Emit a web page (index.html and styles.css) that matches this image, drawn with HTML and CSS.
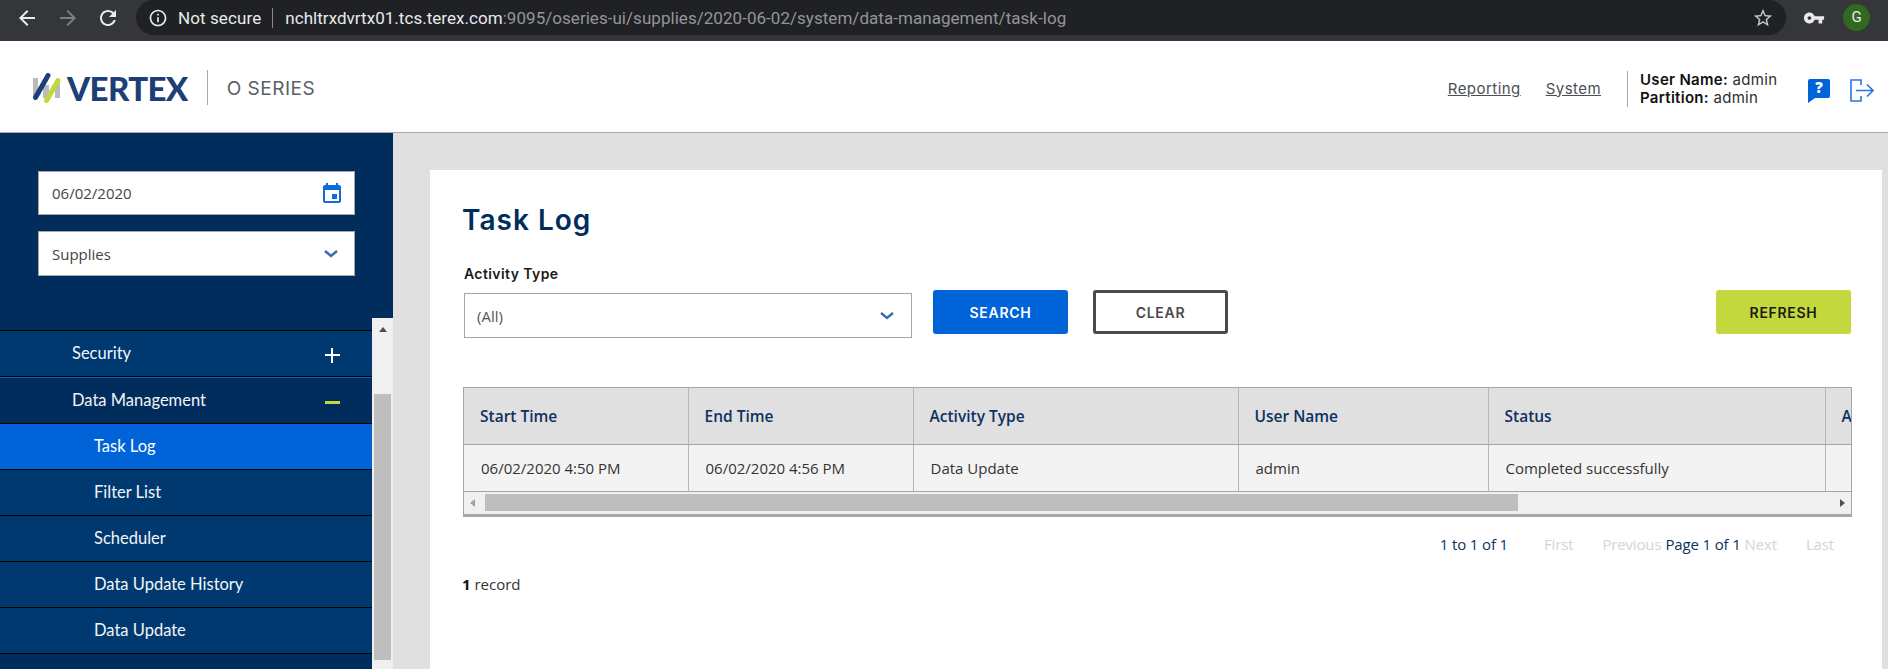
FILE: index.html
```html
<!DOCTYPE html>
<html lang="en">
<head>
    <meta charset="UTF-8">
    <meta name="viewport" content="width=device-width, initial-scale=1.0">
    <title>Task Log</title>
    <link rel="stylesheet" href="styles.css">
</head>
<body>
    <div class="browser-bar">
        <svg class="browser-btn back" viewBox="0 0 24 24"><path d="M20 11H7.83l5.59-5.59L12 4l-8 8 8 8 1.41-1.41L7.83 13H20v-2z"/></svg>
        <svg class="browser-btn forward" viewBox="0 0 24 24"><path d="M4 11h12.17l-5.59-5.59L12 4l8 8-8 8-1.41-1.41L16.17 13H4v-2z"/></svg>
        <svg class="browser-btn reload" viewBox="0 0 24 24"><path d="M17.65 6.35C16.2 4.9 14.21 4 12 4c-4.42 0-7.99 3.58-7.99 8s3.57 8 7.99 8c3.73 0 6.84-2.55 7.73-6h-2.08c-.82 2.33-3.04 4-5.65 4-3.31 0-6-2.69-6-6s2.69-6 6-6c1.66 0 3.14.69 4.22 1.78L13 11h7V4l-2.35 2.35z"/></svg>
        <div class="address-pill">
            <svg class="info-icon" viewBox="0 0 24 24"><path d="M11 7h2v2h-2zm0 4h2v6h-2zm1-9C6.48 2 2 6.48 2 12s4.48 10 10 10 10-4.48 10-10S17.52 2 12 2zm0 18c-4.41 0-8-3.59-8-8s3.59-8 8-8 8 3.59 8 8-3.59 8-8 8z"/></svg>
            <span class="not-secure">Not secure</span>
            <span class="address-sep"></span>
            <span class="url"><span class="url-host">nchltrxdvrtx01.tcs.terex.com</span>:9095/oseries-ui/supplies/2020-06-02/system/data-management/task-log</span>
            <svg class="star-icon" viewBox="0 0 24 24"><path d="M22 9.24l-7.19-.62L12 2 9.19 8.63 2 9.24l5.46 4.73L5.82 21 12 17.27 18.18 21l-1.63-7.03L22 9.24zM12 15.4l-3.76 2.27 1-4.28-3.32-2.88 4.38-.38L12 6.1l1.71 4.04 4.38.38-3.32 2.88 1 4.28L12 15.4z"/></svg>
        </div>
        <svg class="key-icon" viewBox="0 0 24 24"><path d="M12.65 10C11.83 7.67 9.61 6 7 6c-3.31 0-6 2.69-6 6s2.69 6 6 6c2.61 0 4.83-1.67 5.65-4H17v4h4v-4h2v-4H12.65zM7 14c-1.1 0-2-.9-2-2s.9-2 2-2 2 .9 2 2-.9 2-2 2z"/></svg>
        <div class="avatar">G</div>
    </div>

    <header class="app-header">
        <svg class="logo-mark" viewBox="0 0 28 30">
            <path d="M0 5h5v20H0zM10 12h6v13h-6zM22 7h5v18h-5z" fill="#b9bbbd"/>
            <path d="M2.5 24.5L15 2.5" stroke="#1c3f77" stroke-width="5" stroke-linecap="round"/>
            <path d="M13.5 27.5L25 7.5" stroke="#c3d83c" stroke-width="5" stroke-linecap="round"/>
        </svg>
        <span class="logo-text">VERTEX</span>
        <span class="logo-sep"></span>
        <span class="product">O SERIES</span>
        <nav class="top-links">
            <a href="#">Reporting</a>
            <a href="#">System</a>
        </nav>
        <div class="user-info">
            <div><b>User Name:</b> admin</div>
            <div><b>Partition:</b> admin</div>
        </div>
        <svg class="help-icon" viewBox="0 0 22 24">
            <path d="M2 0h18a2 2 0 0 1 2 2v15a2 2 0 0 1-2 2H7l-7 5V2a2 2 0 0 1 2-2z" fill="#0063d8"/>
            <text x="11" y="14" text-anchor="middle" class="help-mark">?</text>
        </svg>
        <svg class="logout-icon" viewBox="0 0 24 23" fill="none" stroke="#2478dc" stroke-width="1.6">
            <path d="M11 6V1H1v21h10v-5"/>
            <path d="M6 11.5h17M17 5.5l6 6-6 6"/>
        </svg>
    </header>

    <div class="main">
        <aside class="sidebar">
            <div class="sidebar-top">
                <div class="side-field date-field">
                    <span>06/02/2020</span>
                    <svg class="calendar-icon" viewBox="0 0 24 24"><path d="M17 12h-5v5h5v-5zM16 1v2H8V1H6v2H5c-1.11 0-1.99.9-1.99 2L3 19c0 1.1.89 2 2 2h14c1.1 0 2-.9 2-2V5c0-1.1-.9-2-2-2h-1V1h-2zm3 18H5V8h14v11z"/></svg>
                </div>
                <div class="side-field supplies-field">
                    <span>Supplies</span>
                    <svg class="chevron" viewBox="0 0 14 8"><path d="M1 1l6 5 6-5" fill="none" stroke="#3e67ad" stroke-width="2.4"/></svg>
                </div>
            </div>
            <div class="nav-wrap">
                <ul class="side-nav">
                    <li class="nav-item">Security <span class="nav-plus"></span></li>
                    <li class="nav-item open">Data Management <span class="nav-minus"></span></li>
                    <li class="nav-item sub active">Task Log</li>
                    <li class="nav-item sub">Filter List</li>
                    <li class="nav-item sub">Scheduler</li>
                    <li class="nav-item sub">Data Update History</li>
                    <li class="nav-item sub">Data Update</li>
                </ul>
                <div class="nav-scrollbar">
                    <span class="arrow-up"></span>
                    <span class="nav-thumb"></span>
                </div>
            </div>
        </aside>

        <section class="content">
            <div class="panel">
                <h1>Task Log</h1>
                <div class="filter-row">
                    <div class="filter-field">
                        <label>Activity Type</label>
                        <div class="filter-select">
                            <span>(All)</span>
                            <svg class="chevron" viewBox="0 0 14 8"><path d="M1 1l6 5 6-5" fill="none" stroke="#3e67ad" stroke-width="2.4"/></svg>
                        </div>
                    </div>
                    <button class="btn btn-search">SEARCH</button>
                    <button class="btn btn-clear">CLEAR</button>
                    <button class="btn btn-refresh">REFRESH</button>
                </div>

                <div class="grid-wrap">
                    <table class="grid">
                        <colgroup>
                            <col class="col-start">
                            <col class="col-end">
                            <col class="col-type">
                            <col class="col-user">
                            <col class="col-status">
                            <col class="col-more">
                        </colgroup>
                        <thead>
                            <tr>
                                <th>Start Time</th>
                                <th>End Time</th>
                                <th>Activity Type</th>
                                <th>User Name</th>
                                <th>Status</th>
                                <th>Activity</th>
                            </tr>
                        </thead>
                        <tbody>
                            <tr>
                                <td>06/02/2020 4:50 PM</td>
                                <td>06/02/2020 4:56 PM</td>
                                <td>Data Update</td>
                                <td>admin</td>
                                <td>Completed successfully</td>
                                <td></td>
                            </tr>
                        </tbody>
                    </table>
                    <div class="h-scrollbar">
                        <span class="arrow-left"></span>
                        <span class="h-thumb"></span>
                        <span class="arrow-right"></span>
                    </div>
                </div>

                <div class="pager">
                    <span class="pager-count">1 to 1 of 1</span>
                    <span class="pager-off pager-first">First</span>
                    <span class="pager-off pager-prev">Previous</span>
                    <span class="pager-page">Page 1 of 1</span>
                    <span class="pager-off pager-next">Next</span>
                    <span class="pager-off pager-last">Last</span>
                </div>
                <div class="record-count"><b>1</b> record</div>
            </div>
        </section>
    </div>
</body>
</html>
```

FILE: styles.css
```css
* {
    box-sizing: border-box;
}
html, body {
    height: 669px;
    margin: 0;
    overflow: hidden;
}
body {
    font-family: "Open Sans", sans-serif;
    background-color: #ffffff;
    color: #333333;
    display: flex;
    flex-direction: column;
}

/* browser chrome */
.browser-bar {
    height: 41px;
    flex: none;
    background-color: #35363a;
    display: flex;
    align-items: flex-start;
}
.browser-btn {
    width: 24px;
    height: 24px;
    margin-top: 6px;
    flex: none;
}
.back {
    fill: #e8eaed;
    margin-left: 15px;
}
.forward {
    fill: #7c7e82;
    margin-left: 17px;
}
.reload {
    fill: #e8eaed;
    margin-left: 16px;
}
.address-pill {
    width: 1650px;
    height: 35px;
    margin-left: 16px;
    background-color: #202124;
    border-radius: 18px;
    display: flex;
    align-items: center;
    padding-left: 12px;
    flex: none;
}
.info-icon {
    width: 20px;
    height: 20px;
    fill: #e8eaed;
    flex: none;
}
.not-secure {
    font-family: "Roboto", sans-serif;
    font-size: 17px;
    letter-spacing: 0.1px;
    color: #e8eaed;
    margin-left: 10px;
}
.address-sep {
    width: 1px;
    height: 20px;
    background-color: #8a8b8e;
    margin: 0 12px 0 11px;
}
.url {
    font-family: "Roboto", sans-serif;
    font-size: 17px;
    letter-spacing: 0.04px;
    color: #93959a;
    white-space: nowrap;
}
.url-host {
    color: #e8eaed;
}
.star-icon {
    width: 22px;
    height: 22px;
    fill: #c4c6c9;
    margin-left: auto;
    margin-right: 12px;
    flex: none;
}
.key-icon {
    width: 22px;
    height: 22px;
    fill: #e8eaed;
    margin: 7px 0 0 17px;
    flex: none;
}
.avatar {
    width: 27px;
    height: 27px;
    margin: 4px 0 0 18px;
    border-radius: 50%;
    background-color: #33691e;
    color: #e8eaed;
    font-family: "Roboto", sans-serif;
    font-size: 15px;
    text-align: center;
    line-height: 27px;
    flex: none;
}

/* app header */
.app-header {
    height: 92px;
    flex: none;
    border-bottom: 1px solid #a9a9a9;
    display: flex;
    align-items: center;
    padding: 0 14px 0 33px;
}
.logo-mark {
    width: 28px;
    height: 30px;
    flex: none;
    margin-top: 2px;
}
.logo-text {
    font-family: "Lato", sans-serif;
    font-weight: 900;
    font-size: 33px;
    color: #1c3f77;
    margin-left: 6px;
    letter-spacing: -0.6px;
    margin-top: 3px;
}
.logo-sep {
    width: 1px;
    height: 35px;
    background-color: #a9a9a9;
    margin: 1px 0 0 19px;
}
.product {
    font-family: "Inter", sans-serif;
    font-size: 19px;
    letter-spacing: 0.5px;
    color: #5b6066;
    margin: 3px 0 0 19px;
}
.top-links {
    margin-left: auto;
    display: flex;
    gap: 25px;
    margin-top: 3px;
}
.top-links a {
    font-family: "Inter", sans-serif;
    font-size: 15px;
    letter-spacing: 0.45px;
    color: #4a4f55;
}
.user-info {
    margin-left: 26px;
    padding-left: 12px;
    border-left: 1px solid #a9a9a9;
    height: 36px;
    font-family: "Inter", sans-serif;
    font-size: 15px;
    letter-spacing: 0.3px;
    line-height: 18px;
    color: #2b2f33;
    margin-top: 4px;
    width: 181px;
}
.user-info b {
    font-weight: 600;
    color: #111111;
}
.help-icon {
    width: 22px;
    height: 24px;
    flex: none;
    margin-top: 8px;
}
.help-mark {
    font-family: "Open Sans", sans-serif;
    font-weight: 800;
    font-size: 15px;
    fill: #ffffff;
}
.logout-icon {
    width: 24px;
    height: 23px;
    flex: none;
    margin: 8px 0 0 20px;
}

/* main area */
.main {
    flex: 1;
    display: flex;
    min-height: 0;
    background-color: #e0e0e0;
}
.sidebar {
    width: 393px;
    flex: none;
    background-color: #002d5c;
    display: flex;
    flex-direction: column;
}
.sidebar-top {
    padding: 38px 38px 0;
    height: 185px;
    flex: none;
    display: flex;
    flex-direction: column;
    gap: 16px;
}
.side-field {
    background-color: #ffffff;
    border: 1px solid #a6a6a6;
    display: flex;
    align-items: center;
    justify-content: space-between;
    padding: 0 12px 0 13px;
    font-size: 15px;
    color: #444444;
}
.date-field {
    height: 44px;
}
.supplies-field {
    height: 45px;
    padding-right: 16px;
}
.calendar-icon {
    width: 24px;
    height: 24px;
    fill: #0f6bdc;
    margin-right: -2px;
    margin-top: 2px;
}
.chevron {
    width: 14px;
    height: 8px;
}
.nav-wrap {
    flex: 1;
    display: flex;
    min-height: 0;
}
.side-nav {
    list-style: none;
    margin: 12px 0 0;
    padding: 0;
    width: 372px;
    flex: none;
    border-top: 1px solid #000000;
    font-family: "Lato", sans-serif;
    overflow: hidden;
}
.nav-item {
    height: 46px;
    background-color: #003870;
    border-bottom: 1px solid #000000;
    color: #f2f5f8;
    font-size: 16.5px;
    display: flex;
    align-items: center;
    justify-content: space-between;
    padding: 0 32px 2px 72px;
}
.nav-item.open {
    background-color: #002d5c;
    border-top: 1px solid #0a5cb8;
    height: 47px;
}
.nav-item.sub {
    padding-left: 94px;
}
.nav-item.active {
    background-color: #0063d8;
    color: #ffffff;
}
.nav-plus, .nav-minus {
    width: 15px;
    height: 15px;
    position: relative;
    margin-top: 6px;
}
.nav-plus::before, .nav-plus::after, .nav-minus::before {
    content: "";
    position: absolute;
    background-color: #ffffff;
}
.nav-plus::before, .nav-minus::before {
    left: 0;
    right: 0;
    top: 6px;
    height: 2px;
}
.nav-plus::after {
    top: 0;
    bottom: 0;
    left: 6px;
    width: 2px;
}
.nav-minus::before {
    background-color: #c3d83c;
    height: 3px;
}
.nav-scrollbar {
    width: 21px;
    flex: none;
    background-color: #f0f0f0;
    display: flex;
    flex-direction: column;
    align-items: center;
}
.arrow-up {
    width: 0;
    height: 0;
    border-left: 4px solid transparent;
    border-right: 4px solid transparent;
    border-bottom: 5px solid #505050;
    margin-top: 9px;
}
.nav-thumb {
    width: 17px;
    height: 266px;
    background-color: #bebebe;
    margin-top: 62px;
}

/* content panel */
.content {
    flex: 1;
    min-width: 0;
    padding: 37px 6px 0 37px;
}
.panel {
    height: 100%;
    background-color: #ffffff;
    padding: 33px 31px 0 33px;
}
h1 {
    margin: 0;
    font-family: "Inter", sans-serif;
    font-weight: 600;
    font-size: 28px;
    letter-spacing: 1px;
    line-height: 34px;
    color: #002d5c;
    margin-left: -1px;
}
.filter-row {
    display: flex;
    align-items: flex-start;
    margin-top: 27px;
}
.filter-field {
    width: 448px;
    margin-left: 1px;
    flex: none;
}
.filter-field label {
    display: block;
    font-family: "Inter", sans-serif;
    font-weight: 600;
    font-size: 14px;
    letter-spacing: 0.4px;
    line-height: 18px;
    color: #1a1a1a;
    margin: 1px 0 10px;
}
.filter-select {
    height: 45px;
    border: 1px solid #a6a6a6;
    display: flex;
    align-items: center;
    justify-content: space-between;
    padding: 0 17px 0 12px;
    font-size: 15px;
    color: #555555;
}
.btn {
    height: 44px;
    width: 135px;
    margin-top: 26px;
    border: none;
    border-radius: 3px;
    font-family: "Inter", sans-serif;
    font-weight: 600;
    font-size: 14px;
    letter-spacing: 0.7px;
    flex: none;
}
.btn-search {
    margin-left: 21px;
    background-color: #0063d8;
    color: #ffffff;
}
.btn-clear {
    margin-left: 25px;
    background-color: #ffffff;
    border: 3px solid #4a4a4a;
    color: #4a4a4a;
}
.btn-refresh {
    margin-left: auto;
    background-color: #c3d83c;
    color: #1a1a1a;
}
.grid-wrap {
    margin-top: 49px;
    border: 1px solid #a6a6a6;
    border-bottom-width: 3px;
    overflow: hidden;
    margin-right: -1px;
}
.grid {
    border-collapse: collapse;
    table-layout: fixed;
    width: 1500px;
}
.col-start { width: 224px; }
.col-end { width: 225px; }
.col-type { width: 325px; }
.col-user { width: 250px; }
.col-status { width: 337px; }
.col-more { width: 139px; }
.grid th {
    height: 56px;
    background-color: #e0e0e0;
    border-right: 1px solid #b8b8b8;
    border-bottom: 1px solid #a6a6a6;
    padding: 0 0 0 16px;
    text-align: left;
    font-weight: 600;
    font-size: 15.5px;
    color: #0e3160;
    white-space: nowrap;
    overflow: hidden;
}
.grid td {
    height: 47px;
    background-color: #f3f3f3;
    border-right: 1px solid #b8b8b8;
    border-bottom: 1px solid #a6a6a6;
    padding: 0 0 0 17px;
    font-size: 15px;
    color: #333333;
}
.h-scrollbar {
    height: 22px;
    background-color: #f0f0f0;
    display: flex;
    align-items: center;
    padding: 0 6px;
}
.arrow-left {
    width: 0;
    height: 0;
    border-top: 4px solid transparent;
    border-bottom: 4px solid transparent;
    border-right: 5px solid #a0a0a0;
    flex: none;
}
.h-thumb {
    width: 1033px;
    height: 17px;
    background-color: #bebebe;
    margin-left: 10px;
}
.arrow-right {
    width: 0;
    height: 0;
    border-top: 4px solid transparent;
    border-bottom: 4px solid transparent;
    border-left: 5px solid #505050;
    margin-left: auto;
}
.pager {
    display: flex;
    justify-content: flex-end;
    align-items: center;
    margin-top: 17px;
    padding-right: 17px;
    font-size: 15px;
    letter-spacing: -0.15px;
    line-height: 20px;
    white-space: nowrap;
}
.pager-count {
    color: #0e3160;
}
.pager-page {
    color: #0e3160;
    margin: 0 4px;
}
.pager-off {
    color: #d4d4d4;
}
.pager-first {
    margin-left: 36px;
}
.pager-prev {
    margin-left: 29px;
}
.pager-last {
    margin-left: 29px;
}
.record-count {
    margin-top: 20px;
    font-size: 15px;
    line-height: 20px;
    color: #333333;
    margin-left: -1px;
}
.record-count b {
    color: #111111;
}
```
